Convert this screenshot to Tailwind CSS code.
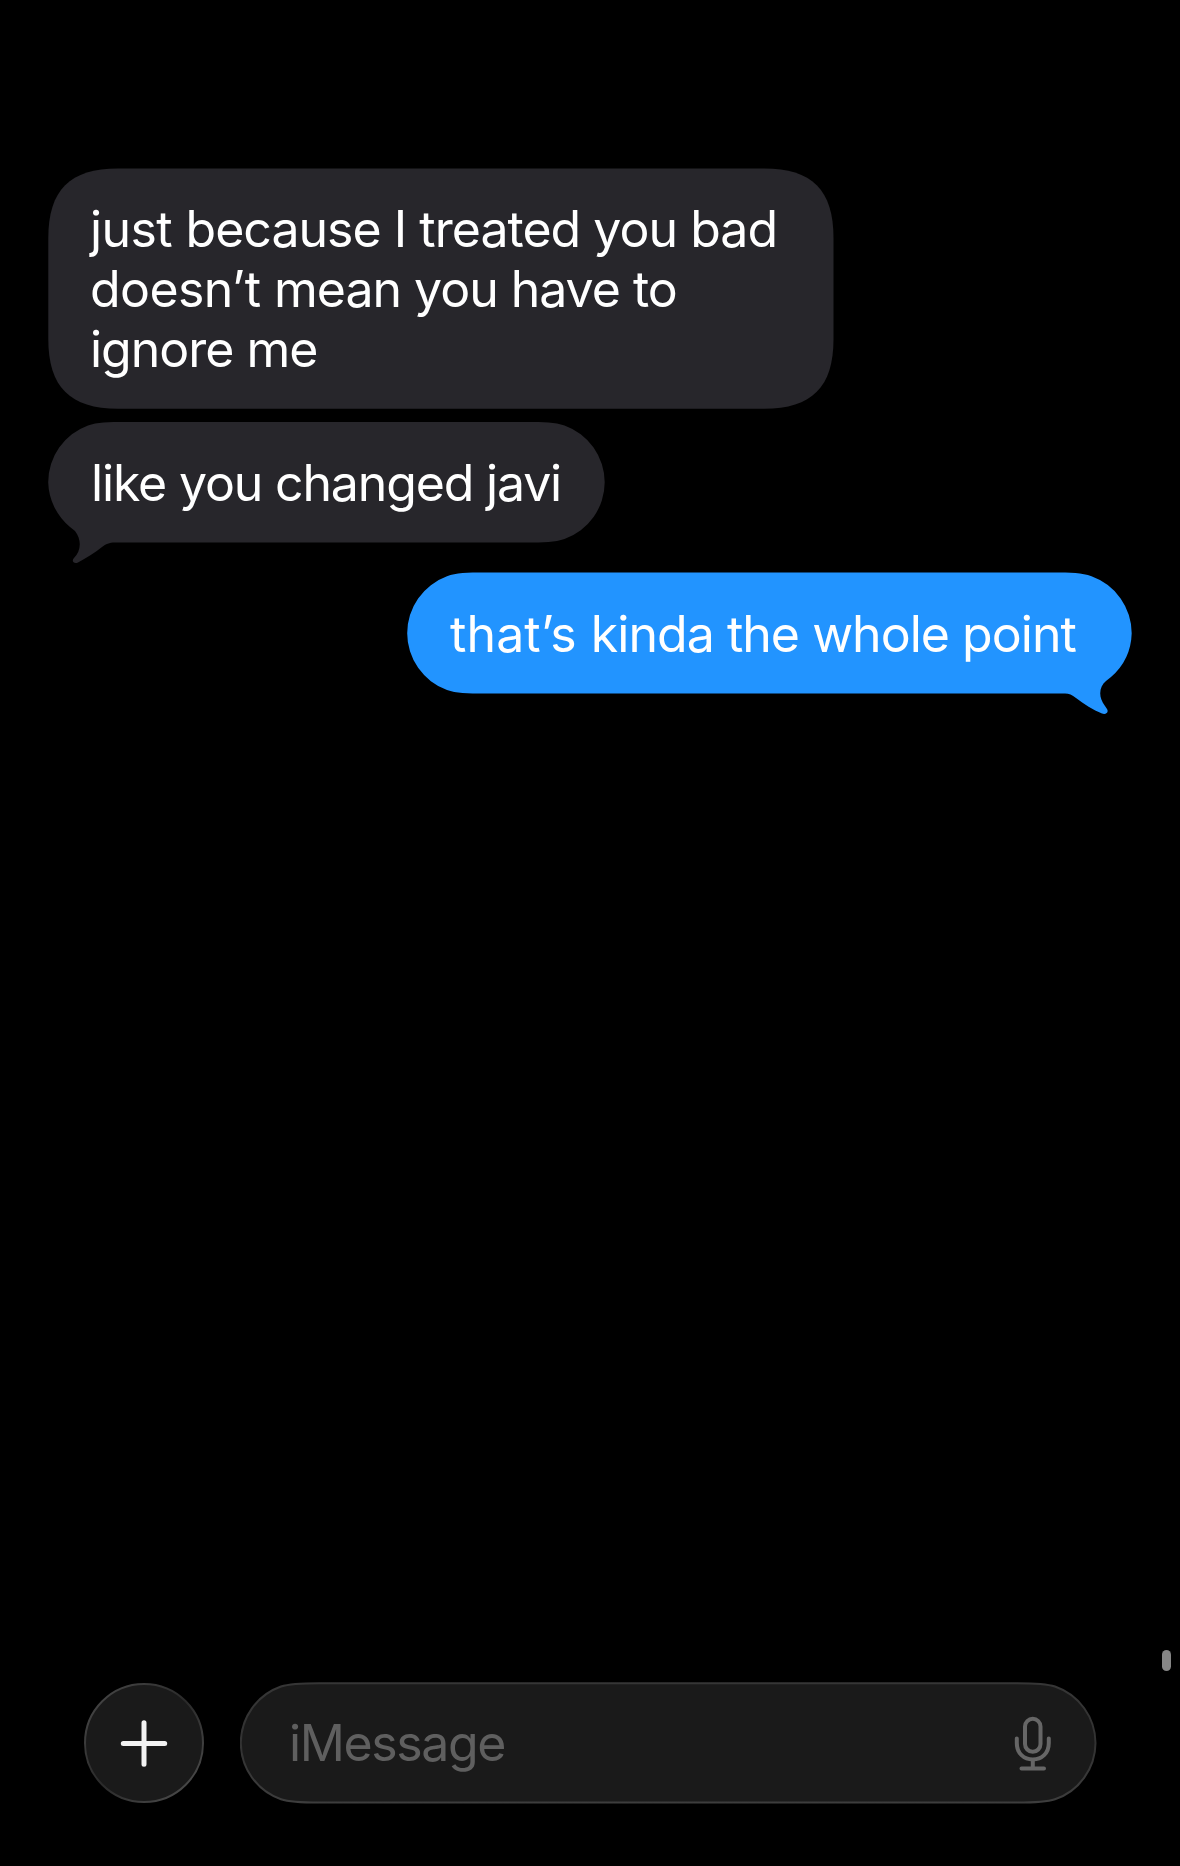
<!DOCTYPE html>
<html lang="en">
<head>
<meta charset="utf-8">
<title>Messages</title>
<script src="https://cdn.jsdelivr.net/npm/@tailwindcss/browser@4"></script>
</head>
<body class="bg-black">
<main class="relative flex h-[1866px] w-[1180px] flex-col overflow-hidden bg-black pt-[168px] font-[Inter,sans-serif] text-[50px] leading-[60px] text-white">
  <section class="flex flex-col pr-[48px] pl-[48px]">
    <div class="relative h-[241px] w-[786px] px-[43px] pt-[31px]">
      <svg class="absolute inset-0" width="786" height="241" viewBox="0 0 786 241" fill="#27262b"><path d="M.3 70C.3 22 22 .5 70 .5H716C764 .5 785.5 22 785.5 70V171C785.5 219 764 240.700 716 240.700H70C22 240.700 .3 219 .3 171Z"/></svg>
      <p class="relative whitespace-nowrap"><span class="-ml-[1px] tracking-[-0.97px]"><span class="tracking-[-0.6px]">just </span>because I treated you bad</span><br><span class="-ml-[1px] tracking-[-1.02px]"><span class="tracking-[-0.6px]">doesn’t </span>mean you have to</span><br><span class="-ml-[1px] tracking-[-1px]">ignore me</span></p>
    </div>
    <div class="relative mt-[13px] h-[121px] w-[557px] px-[43px] pt-[31px]">
      <svg class="absolute top-0 left-0" width="557" height="143" viewBox="0 0 557 143" fill="#27262b"><path d="M78 0H478C496 0 507 .3 516.500 3.500A60.500 60.500 0 0 1 556.700 60.200A60.500 60.500 0 0 1 516.500 117C507 120.200 496 120.500 478 120.500H67C61 120.500 58 122 54 125C47 131 38 136 30 140.500C26 142.500 23 139 26 136C33 129 34 118 27 109L22 105A60.500 60.500 0 0 1 .2 60.200A60.500 60.500 0 0 1 40 3.500C49 .3 60 0 78 0Z"/></svg>
      <p class="relative whitespace-nowrap tracking-[-1.16px]">like you changed javi</p>
    </div>
    <div class="relative mt-[30px] h-[121px] w-[725px] self-end px-[43px] pt-[31px]">
      <svg class="absolute top-0 left-0 overflow-visible" width="725" height="143" viewBox="0 0 725 143" fill="#2294ff"><path d="M78 -.4H646C664 -.4 675 0 684.500 3.300A60.500 60.500 0 0 1 724.700 60.200A60.500 60.500 0 0 1 704 104L699 108C692 114 691 124 698 133L700 136C702 139 699 142 695 140.500C686 137 677 131 669 125C665 122 662 120.600 658 120.600H78C60 120.600 49 120.200 40 117A60.500 60.500 0 0 1 40 3.300C49 0 60 -.4 78 -.4Z"/></svg>
      <p class="relative whitespace-nowrap tracking-[-0.97px]"><span class="tracking-[0.12px]">that’s </span>kinda the whole point</p>
    </div>
  </section>

  <footer class="mt-auto mb-[62px] flex h-[122px] items-center gap-[35px] pl-[84px]">
    <button class="h-[121px] w-[121px]" aria-label="Add">
      <svg width="121" height="121" viewBox="0 0 121 121" fill="none">
        <defs><linearGradient id="ring" x1="0" y1="0" x2="1" y2="1"><stop offset=".12" stop-color="#434343"/><stop offset=".5" stop-color="#2a2a2a"/><stop offset=".88" stop-color="#484848"/></linearGradient></defs>
        <circle cx="60" cy="60" r="59" fill="#1a1a1a" stroke="url(#ring)" stroke-width="2"/>
        <path d="M60 39.800V81.200M39.300 60.400H80.700" stroke="#f2f2f2" stroke-width="5" stroke-linecap="round"/>
      </svg>
    </button>
    <div class="relative flex h-[122px] w-[857px] items-center justify-between pr-[45px] pl-[49px]">
      <svg class="absolute inset-0" width="857" height="122" viewBox="0 0 857 122">
        <defs><linearGradient id="edge" x1="0" y1="0" x2="0" y2="1"><stop offset="0" stop-color="#363636"/><stop offset=".5" stop-color="#323232"/><stop offset="1" stop-color="#3d3d3d"/></linearGradient></defs>
        <path d="M79 1.200H777C795 1.200 806 1.500 815 4.500A60 60 0 0 1 855.500 60.900A60 60 0 0 1 815 117.300C806 120.300 795 120.600 777 120.600H79C61 120.600 50 120.300 41 117.300A60 60 0 0 1 .8 60.900A60 60 0 0 1 41 4.500C50 1.500 61 1.200 79 1.200Z" fill="#1a1a1a" stroke="url(#edge)" stroke-width="2"/>
      </svg>
      <span class="relative tracking-[-1.37px] text-[#5f5f5f]">iMessage</span>
      <svg class="relative" width="38" height="56" viewBox="0 0 38 56" fill="none" stroke="#666" stroke-width="4" stroke-linecap="round"><rect x="11" y="3.800" width="15.500" height="33" rx="7.750"/><path d="M2.800 23.500V28C2.800 38.500 10 44.500 18.800 44.500S34.800 38.500 34.800 28V23.500M18.800 45V53M7.500 53.500H30"/></svg>
    </div>
  </footer>
  <div class="absolute top-[1650px] right-[9px] h-[21px] w-[9px] rounded-full bg-[#868686]"></div>
</main>
</body>
</html>
